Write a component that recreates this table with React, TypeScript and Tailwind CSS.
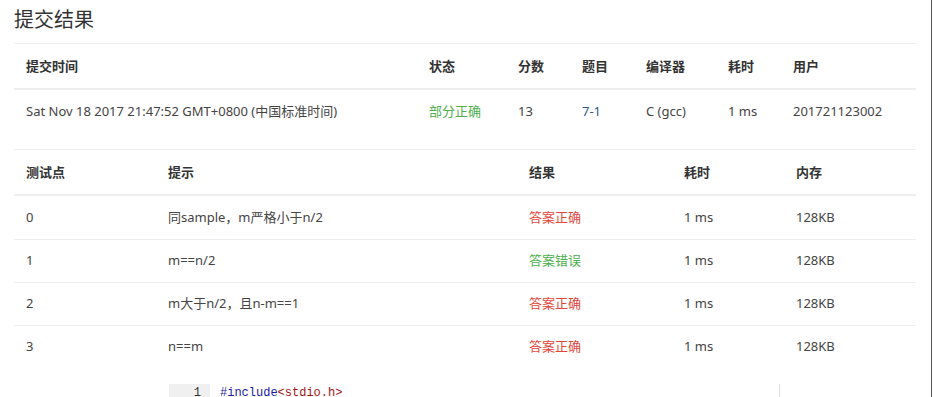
const FONT = "font-['Segoe_UI','Noto_Sans','Noto_Sans_CJK_SC',sans-serif]";

const summaryCols = 'grid grid-cols-[403px_89px_64px_64px_82px_65px_135px]';
const caseCols = 'grid grid-cols-[142px_361px_155px_112px_132px]';

const summaryHead = ['提交时间', '状态', '分数', '题目', '编译器', '耗时', '用户'];
const caseHead = ['测试点', '提示', '结果', '耗时', '内存'];

type CaseRow = { id: string; hint: string; result: string; ok: boolean; time: string; mem: string };

const cases: CaseRow[] = [
  { id: '0', hint: '同sample，m严格小于n/2', result: '答案正确', ok: true, time: '1 ms', mem: '128KB' },
  { id: '1', hint: 'm==n/2', result: '答案错误', ok: false, time: '1 ms', mem: '128KB' },
  { id: '2', hint: 'm大于n/2，且n-m==1', result: '答案正确', ok: true, time: '1 ms', mem: '128KB' },
  { id: '3', hint: 'n==m', result: '答案正确', ok: true, time: '1 ms', mem: '128KB' },
];

function HeadRow({ cols, items }: { cols: string; items: string[] }) {
  return (
    <div className={`${cols} h-[47px] pt-[2px] border-t border-b-2 border-[#eee] items-center`}>
      {items.map((h, i) => (
        <div key={i} className="px-3 font-bold text-[#333]">
          {h}
        </div>
      ))}
    </div>
  );
}

function App() {
  return (
    <div className={`flex w-[933px] h-[397px] overflow-hidden bg-white text-[13px] text-[#444] ${FONT}`}>
      <div className="flex-1 pl-[14px] pr-[15px]">
        <h2 className="pt-[6px] h-[34px] leading-[28px] text-[20px] text-[#333] mb-[9px]">提交结果</h2>

        <div className="mb-4">
          <HeadRow cols={summaryCols} items={summaryHead} />
          <div className={`${summaryCols} h-[43px] items-center`}>
            <div className="px-3">Sat Nov 18 2017 21:47:52 GMT+0800 (中国标准时间)</div>
            <div className="px-3 text-[#4cae4c]">部分正确</div>
            <div className="px-3">13</div>
            <div className="px-3 text-[#2d5a8e]">7-1</div>
            <div className="px-3">C (gcc)</div>
            <div className="px-3">1 ms</div>
            <div className="px-3">201721123002</div>
          </div>
        </div>

        <div>
          <HeadRow cols={caseCols} items={caseHead} />
          {cases.map((c, i) => (
            <div
              key={c.id}
              className={`${caseCols} items-center ${i === 0 ? 'h-[43px]' : 'h-[43px] border-t border-[#eee]'}`}
            >
              <div className="px-3">{c.id}</div>
              <div className="px-3">{c.hint}</div>
              <div className={`px-3 ${c.ok ? 'text-[#e2463b]' : 'text-[#4cae4c]'}`}>{c.result}</div>
              <div className="px-3">{c.time}</div>
              <div className="px-3">{c.mem}</div>
            </div>
          ))}
        </div>

        <div className="mt-[16px] ml-[155px] flex h-[20px] font-['Liberation_Mono',monospace] text-[12px] leading-[16px]">
          <div className="w-[41px] bg-[#f0f0f0] text-right pr-[9px] pt-[1px] text-[#333]">1</div>
          <div className="pl-[10px] pt-[1px] w-[570px] border-r border-[#ddd]">
            <span className="text-[#1a1aa6]">#include</span>
            <span className="text-[#a31515]">&lt;stdio.h&gt;</span>
          </div>
        </div>
      </div>
      <div className="w-px bg-[#555]" />
      <div className="w-px bg-white" />
    </div>
  );
}

export default App;
